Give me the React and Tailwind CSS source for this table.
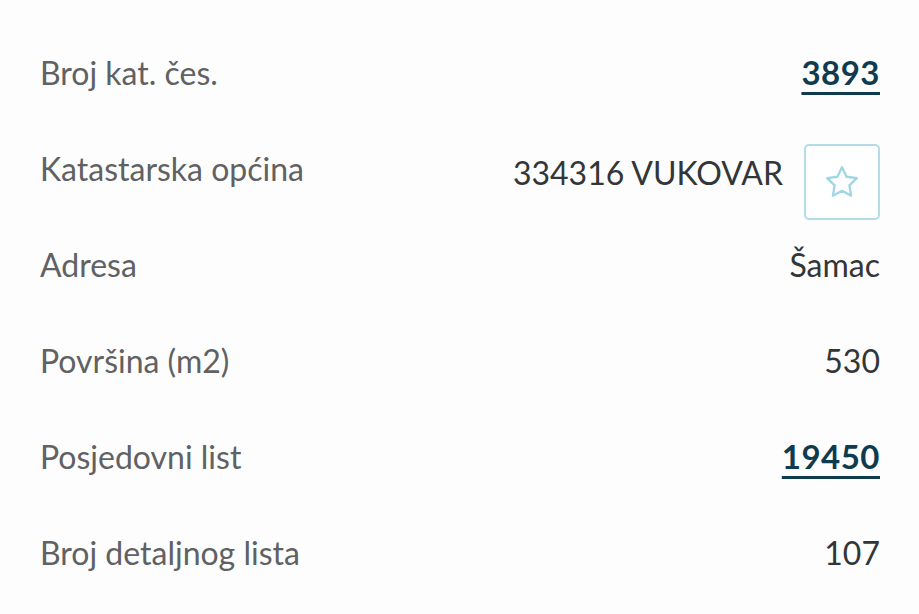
import React from 'react';

const rows = [
    { label: 'Broj kat. čes.', value: '3893', link: true },
    { label: 'Katastarska općina', value: '334316 VUKOVAR', fav: true },
    { label: 'Adresa', value: 'Šamac' },
    { label: 'Površina (m2)', value: '530' },
    { label: 'Posjedovni list', value: '19450', link: true },
    { label: 'Broj detaljnog lista', value: '107' },
];

function StarIcon() {
    return (
        <svg width="42" height="42" viewBox="0 0 24 24" fill="none" stroke="#9fd6e4" strokeWidth="1.3" strokeLinejoin="round">
            <path d="M12 3.6l2.6 5.4 5.9.8-4.3 4.1 1 5.9L12 17l-5.2 2.8 1-5.9-4.3-4.1 5.9-.8z" />
        </svg>
    );
}

export default function App() {
    return (
        <div className="min-h-screen bg-[#fdfdfd] px-[39px] pt-[25px] font-['Lato',sans-serif]">
            {rows.map((row) => (
                <div key={row.label} className="flex h-[96px] items-center justify-between">
                    <span className="pl-px text-[32px] text-[#5f6163]">{row.label}</span>
                    {row.link ? (
                        <a href="#" className="text-[33px] font-bold tracking-[0.5px] text-[#0f3b4f] underline decoration-[3px] underline-offset-[7px]">
                            {row.value}
                        </a>
                    ) : row.fav ? (
                        <div className="mt-[25px] flex items-center gap-[21px]">
                            <span className="mb-[18px] text-[32px] text-[#333638]">{row.value}</span>
                            <button className="flex h-[76px] w-[76px] items-center justify-center rounded-[5px] border-2 border-[#b3dde6] bg-white">
                                <StarIcon />
                            </button>
                        </div>
                    ) : (
                        <span className="text-[32px] text-[#333638]">{row.value}</span>
                    )}
                </div>
            ))}
        </div>
    );
}
